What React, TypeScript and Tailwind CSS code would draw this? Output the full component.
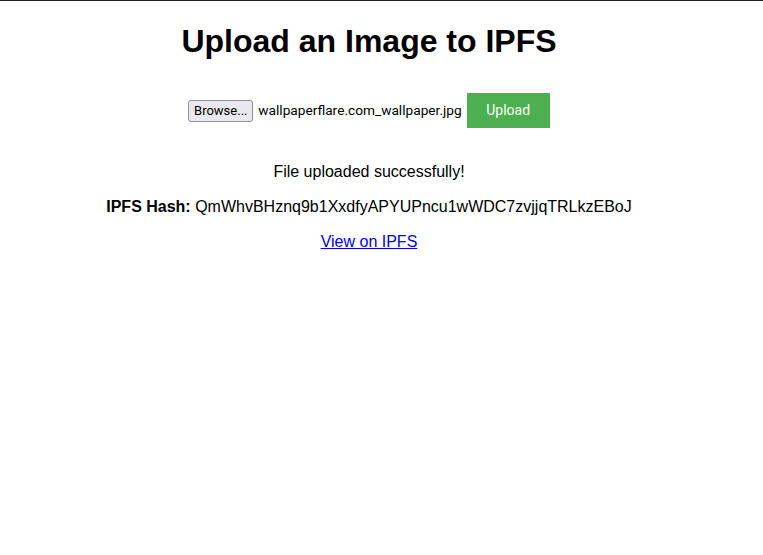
import { useState } from 'react'

export default function App() {
    const [fileName] = useState('wallpaperflare.com_wallpaper.jpg')
    const hash = 'QmWhvBHznq9b1XxdfyAPYUPncu1wWDC7zvjjqTRLkzEBoJ'

    return (
        <div className="min-h-[555px] bg-white border-t border-[#1e2228] font-['Liberation_Sans',Arial,sans-serif] text-black">
            <div className="w-[738px] flex flex-col items-center text-center">
                <h1 className="mt-[22px] mb-0 text-[32px] leading-[36px] font-bold">Upload an Image to IPFS</h1>

                <div className="mt-[34px] flex items-center h-[35px] font-['Roboto',sans-serif]">
                    <button className="h-[22px] w-[65px] border border-[#8f8f9d] rounded-[3px] bg-[#e9e9ed] text-[13px] leading-none text-black">
                        Browse...
                    </button>
                    <span className="ml-[5px] text-[13.7px]">{fileName}</span>
                    <button className="ml-[5px] h-[35px] w-[83px] bg-[#4caf50] text-white text-[14px]">Upload</button>
                </div>

                <p className="mt-[35px] text-[16px] leading-[18px]">File uploaded successfully!</p>
                <p className="mt-[17px] text-[16px] leading-[18px]">
                    <strong>IPFS Hash:</strong> {hash}
                </p>
                <p className="mt-[17px] text-[16px] leading-[18px]">
                    <a href="#" className="text-[#0000ee] underline">View on IPFS</a>
                </p>
            </div>
        </div>
    )
}
